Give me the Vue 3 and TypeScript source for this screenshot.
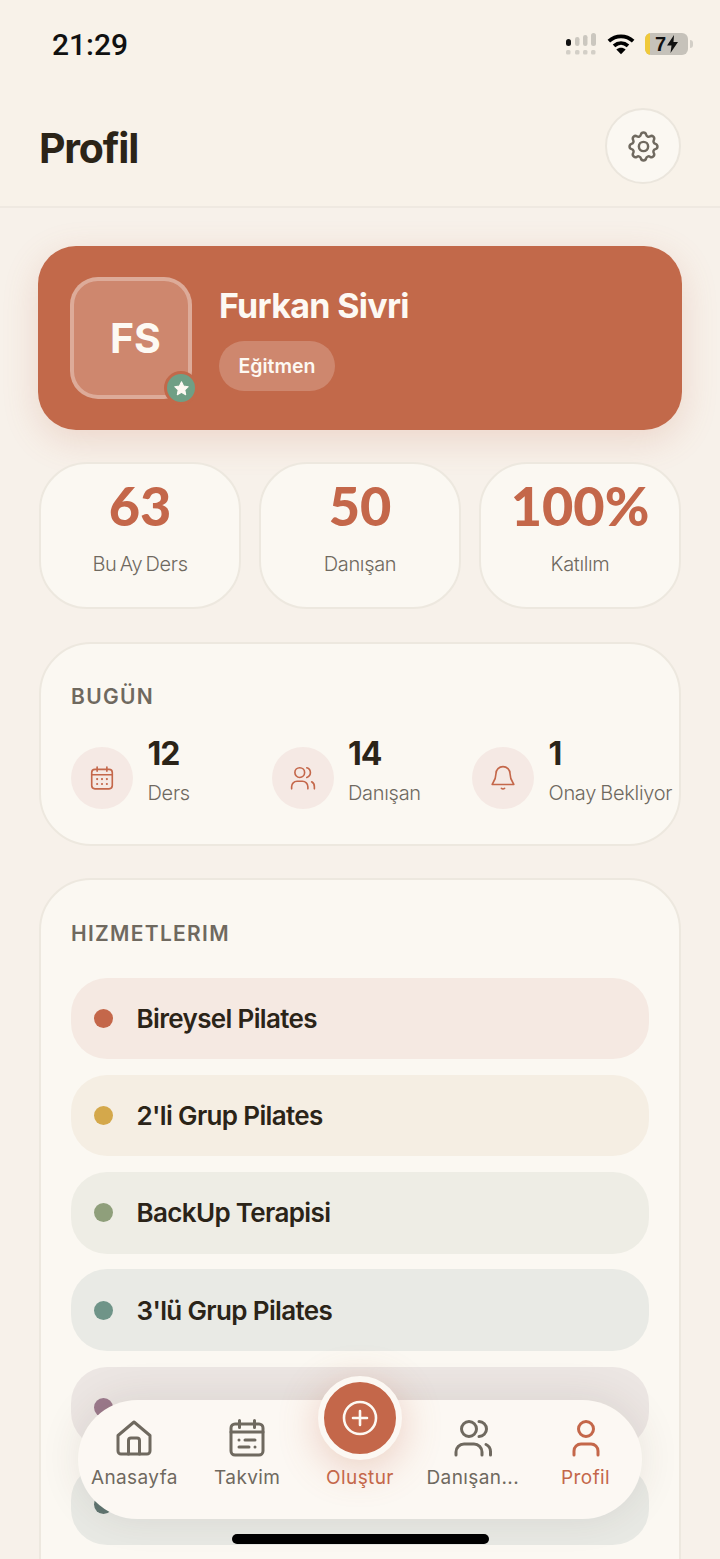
<template>
  <div class="screen">
    <header class="top">
      <div class="status">
        <span class="clock">21:29</span>
        <div class="status-icons">
          <svg width="32" height="22" viewBox="0 0 32 22">
            <rect x="1" y="6" width="5" height="7" rx="2.500" fill="#111" />
            <rect x="10" y="4" width="4.500" height="9" rx="2.200" fill="#cbc7bf" />
            <rect x="18" y="2" width="4.500" height="11" rx="2.200" fill="#cbc7bf" />
            <rect x="26" y="0" width="5" height="13" rx="2.500" fill="#cbc7bf" />
            <rect x="1" y="17" width="4.500" height="4.500" rx="1.500" fill="#d3cfc7" />
            <rect x="10" y="17" width="4.500" height="4.500" rx="1.500" fill="#d3cfc7" />
            <rect x="18" y="17" width="4.500" height="4.500" rx="1.500" fill="#d3cfc7" />
            <rect x="26" y="17" width="4.500" height="4.500" rx="1.500" fill="#d3cfc7" />
          </svg>
          <svg width="28" height="22" viewBox="0 0 30 23" fill="none" stroke="#000" stroke-width="4">
            <path d="M2 8.500C9.500 1.500 20.500 1.500 28 8.500" />
            <path d="M7.500 13.500C12 9.500 18 9.500 22.500 13.500" />
            <path d="M15 22.500L10 17.500C13 15 17 15 20 17.500Z" fill="#000" stroke="none" />
          </svg>
          <div class="battery-wrap">
            <div class="battery">
              <span class="charge"></span>
              <span class="level">7</span>
              <svg width="11" height="18" viewBox="0 0 11 18"><path d="M7 0L0 10.500H4.500L3.500 18L11 7H6.500Z" fill="#111" /></svg>
            </div>
            <span class="nub"></span>
          </div>
        </div>
      </div>
      <div class="title-row">
        <h1>Profil</h1>
        <button class="gear" type="button">
          <svg width="37" height="37" viewBox="0 0 24 24" fill="none" stroke="#6f695f" stroke-width="1.600" stroke-linecap="round" stroke-linejoin="round">
            <path d="M10.300 4.300c.4-1.800 3-1.800 3.400 0a1.700 1.700 0 0 0 2.600 1.100c1.500-.9 3.300.8 2.400 2.400a1.700 1.700 0 0 0 1 2.500c1.800.5 1.800 3 0 3.400a1.700 1.700 0 0 0-1 2.600c.9 1.500-.9 3.300-2.400 2.400a1.700 1.700 0 0 0-2.600 1c-.4 1.800-3 1.800-3.400 0a1.700 1.700 0 0 0-2.600-1c-1.500.9-3.300-.9-2.400-2.400a1.700 1.700 0 0 0-1-2.600c-1.800-.4-1.800-2.900 0-3.400a1.700 1.700 0 0 0 1-2.500c-.9-1.600.9-3.300 2.400-2.400a1.700 1.700 0 0 0 2.600-1.100z" />
            <circle cx="12" cy="12" r="3" />
          </svg>
        </button>
      </div>
    </header>

    <main class="content">
      <section class="hero">
        <div class="avatar">
          FS
          <span class="star">
            <svg width="17" height="17" viewBox="0 0 24 24"><path d="M12 2.500l2.900 6.100 6.600.9-4.800 4.600 1.200 6.600-5.900-3.200-5.900 3.200 1.200-6.600-4.800-4.600 6.600-.9z" fill="#fdf9f3" stroke="#fdf9f3" stroke-width="1.500" stroke-linejoin="round" /></svg>
          </span>
        </div>
        <div class="hero-text">
          <div class="name">Furkan Sivri</div>
          <span class="role">Eğitmen</span>
        </div>
      </section>

      <section class="stats">
        <div v-for="s in stats" :key="s.label" class="stat">
          <div class="stat-value">{{ s.value }}</div>
          <div class="stat-label">{{ s.label }}</div>
        </div>
      </section>

      <section class="card today">
        <h2>BUGÜN</h2>
        <div class="today-row">
          <div class="today-item">
            <span class="round">
              <svg width="26" height="26" viewBox="0 0 24 24" fill="none" stroke="#c4674a" stroke-width="1.500" stroke-linecap="round" stroke-linejoin="round">
                <rect x="2.500" y="4" width="19" height="18" rx="3" />
                <path d="M2.500 9h19M7.500 1.800v4M16.500 1.800v4" />
                <path d="M7.500 13h.01M12 13h.01M16.500 13h.01M7.500 17.500h.01M12 17.500h.01M16.500 17.500h.01" stroke-width="2" />
              </svg>
            </span>
            <div>
              <div class="today-num">12</div>
              <div class="today-label">Ders</div>
            </div>
          </div>
          <div class="today-item">
            <span class="round">
              <svg width="26" height="26" viewBox="0 0 24 24" fill="none" stroke="#c4674a" stroke-width="1.500" stroke-linecap="round" stroke-linejoin="round">
                <circle cx="9" cy="7" r="4.500" />
                <path d="M1.500 22v-2a5 5 0 0 1 5-5h5a5 5 0 0 1 5 5v2M15.500 2.500a4.700 4.700 0 0 1 0 9M20 15.500a5 5 0 0 1 2.500 4.500v2" />
              </svg>
            </span>
            <div>
              <div class="today-num">14</div>
              <div class="today-label">Danışan</div>
            </div>
          </div>
          <div class="today-item">
            <span class="round">
              <svg width="26" height="26" viewBox="0 0 24 24" fill="none" stroke="#c4674a" stroke-width="1.500" stroke-linecap="round" stroke-linejoin="round">
                <path d="M12 1.500a6.500 6.500 0 0 0-6.500 6.500c0 6-3.500 9-3.500 10h20c0-1-3.500-4-3.500-10A6.500 6.500 0 0 0 12 1.500z" />
                <path d="M10.500 21.500a2 2 0 0 0 3 0" />
              </svg>
            </span>
            <div>
              <div class="today-num">1</div>
              <div class="today-label">Onay Bekliyor</div>
            </div>
          </div>
        </div>
      </section>

      <section class="card services">
        <h2>HIZMETLERIM</h2>
        <div class="service-list">
          <div v-for="s in services" :key="s.dot" class="service" :style="{ background: s.bg }">
            <span class="dot" :style="{ background: s.dot }"></span>
            <span class="service-name">{{ s.name }}</span>
          </div>
        </div>
      </section>
    </main>

    <nav class="tabbar">
      <div class="tab">
        <svg width="38" height="38" viewBox="0 0 38 38" fill="none" stroke="#6f695f" stroke-width="3" stroke-linecap="round" stroke-linejoin="round">
          <path d="M3 16.500L19 3l16 13.500V32a3 3 0 0 1-3 3H6a3 3 0 0 1-3-3z" />
          <path d="M13.500 35V21.500a2.500 2.500 0 0 1 2.500-2.500h6a2.500 2.500 0 0 1 2.500 2.500V35" />
        </svg>
        <span>Anasayfa</span>
      </div>
      <div class="tab">
        <svg width="36" height="38" viewBox="0 0 36 38" fill="none" stroke="#6f695f" stroke-width="3" stroke-linecap="round" stroke-linejoin="round">
          <rect x="2" y="5" width="32" height="31" rx="4" />
          <path d="M2 13h32M10.500 1.500v7M25.500 1.500v7M10 21h.01M16 21h10M10 28h10M26 28h.01" />
        </svg>
        <span>Takvim</span>
      </div>
      <div class="tab create">
        <button class="plus" type="button">
          <svg width="38" height="38" viewBox="0 0 38 38" fill="none" stroke="#fdf9f3" stroke-width="2.600" stroke-linecap="round">
            <circle cx="19" cy="19" r="16" />
            <path d="M19 12v14M12 19h14" />
          </svg>
        </button>
        <span>Oluştur</span>
      </div>
      <div class="tab">
        <svg width="38" height="38" viewBox="0 0 38 38" fill="none" stroke="#6f695f" stroke-width="3" stroke-linecap="round" stroke-linejoin="round">
          <circle cx="15" cy="10" r="7.500" />
          <path d="M2 36v-3a8 8 0 0 1 8-8h10a8 8 0 0 1 8 8v3M25 2.500a7.500 7.500 0 0 1 0 15M32 25.500a8 8 0 0 1 4.500 7V36" />
        </svg>
        <span>Danışan...</span>
      </div>
      <div class="tab active">
        <svg width="36" height="38" viewBox="0 0 36 38" fill="none" stroke="#c4674a" stroke-width="3" stroke-linecap="round" stroke-linejoin="round">
          <circle cx="18" cy="10" r="7.500" />
          <path d="M6 36v-4a7 7 0 0 1 7-7h10a7 7 0 0 1 7 7v4" />
        </svg>
        <span>Profil</span>
      </div>
    </nav>

    <div class="home-bar"></div>
  </div>
</template>

<script setup lang="ts">
const stats = [
  { value: '63', label: 'Bu Ay Ders' },
  { value: '50', label: 'Danışan' },
  { value: '100%', label: 'Katılım' },
];

// the last two rows sit behind the tab bar, their names can't be read
const services = [
  { name: 'Bireysel Pilates', dot: '#c4674a', bg: '#f5e9e2' },
  { name: "2'li Grup Pilates", dot: '#d4a84b', bg: '#f5eee3' },
  { name: 'BackUp Terapisi', dot: '#8f9f7b', bg: '#eeede5' },
  { name: "3'lü Grup Pilates", dot: '#6f9488', bg: '#e9eae5' },
  { name: '', dot: '#9c7a8c', bg: '#ece6e3' },
  { name: '', dot: '#5f7570', bg: '#e8e9e4' },
];
</script>

<style>
html,
body {
  margin: 0;
  background: #f7f1ea;
}
</style>

<style scoped>
.screen {
  position: relative;
  width: 720px;
  height: 1559px;
  overflow: hidden;
  background: #f7f1ea;
  font-family: Inter, 'Noto Sans', sans-serif;
  color: #2b2418;
}

.top {
  height: 206px;
  background: #f8f2e9;
  border-bottom: 2px solid #efe9e1;
}

.status {
  display: flex;
  justify-content: space-between;
  align-items: center;
  height: 24px;
  padding: 32px 27px 0 52px;
}

.clock {
  font-family: Roboto, sans-serif;
  font-size: 30px;
  font-weight: 500;
  color: #111;
}

.status-icons {
  display: flex;
  align-items: center;
  gap: 10px;
}

.battery-wrap {
  display: flex;
  align-items: center;
  gap: 2px;
}

.nub {
  width: 3px;
  height: 8px;
  border-radius: 0 3px 3px 0;
  background: #d3cfc7;
}

.battery {
  position: relative;
  display: flex;
  align-items: center;
  justify-content: center;
  gap: 1px;
  width: 43px;
  height: 22px;
  overflow: hidden;
  border-radius: 6px;
  background: #c6c2ba;
}

.charge {
  position: absolute;
  left: 0;
  top: 0;
  bottom: 0;
  width: 5px;
  background: #f0c93a;
}

.level {
  font-family: 'Liberation Sans', sans-serif;
  font-size: 20px;
  font-weight: 700;
  color: #111;
}

.title-row {
  display: flex;
  justify-content: space-between;
  align-items: center;
  padding: 52px 39px 0 39px;
}

h1 {
  margin: 4px 0 0;
  font-size: 41px;
  font-weight: 700;
  letter-spacing: -1.200px;
  color: #2b2418;
}

.gear {
  display: flex;
  align-items: center;
  justify-content: center;
  width: 76px;
  height: 76px;
  padding: 0;
  border: 2px solid #ebe6dd;
  border-radius: 50%;
  background: #fbf8f2;
}

.content {
  padding: 38px 38px 0;
}

.hero {
  display: flex;
  align-items: center;
  gap: 27px;
  height: 184px;
  box-sizing: border-box;
  padding: 0 32px;
  border-radius: 38px;
  background: #c2694a;
  box-shadow: 0 10px 36px rgba(196, 103, 74, 0.2);
}

.avatar {
  position: relative;
  display: flex;
  align-items: center;
  justify-content: center;
  width: 122px;
  height: 122px;
  box-sizing: border-box;
  padding-left: 9px;
  border: 4px solid rgba(255, 255, 255, 0.3);
  border-radius: 28px;
  background: rgba(255, 255, 255, 0.2);
  font-size: 41px;
  font-weight: 700;
  color: #fdf9f3;
}

.star {
  position: absolute;
  right: -10px;
  bottom: -10px;
  display: flex;
  align-items: center;
  justify-content: center;
  width: 28px;
  height: 28px;
  border: 3px solid #c2694a;
  border-radius: 50%;
  background: #6f9f85;
}

.hero-text {
  display: flex;
  flex-direction: column;
  align-items: flex-start;
  gap: 15px;
}

.name {
  font-size: 34px;
  font-weight: 700;
  letter-spacing: -0.700px;
  color: #fdf9f3;
}

.role {
  display: flex;
  align-items: center;
  height: 50px;
  padding: 0 19.500px;
  border-radius: 26px;
  background: rgba(255, 255, 255, 0.2);
  font-size: 19.500px;
  font-weight: 600;
  color: #fdf9f3;
}

.stats {
  display: grid;
  grid-template-columns: repeat(3, 1fr);
  gap: 18px;
  margin: 32px 1px 0;
}

.stat {
  display: flex;
  flex-direction: column;
  align-items: center;
  height: 147px;
  box-sizing: border-box;
  padding-top: 12px;
  border: 2px solid #ede8df;
  border-radius: 48px;
  background: #fbf8f2;
}

.stat-value {
  font-family: Lato, Inter, sans-serif;
  font-size: 54px;
  font-weight: 900;
  line-height: 60px;
  color: #c4674a;
}

.stat-label {
  margin-top: 16px;
  font-size: 20px;
  font-weight: 300;
  letter-spacing: -0.350px;
  word-spacing: -2px;
  color: #6f695f;
}

.card {
  margin: 33px 1px 0;
  box-sizing: border-box;
  border: 2px solid #ede8df;
  border-radius: 52px;
  background: #fbf8f2;
}

.today {
  height: 204px;
  padding: 40px 0 0 30px;
}

h2 {
  margin: 0;
  font-size: 21px;
  font-weight: 600;
  line-height: 26px;
  letter-spacing: 1.300px;
  color: #6f695f;
}

.today-row {
  display: flex;
  margin-top: 24px;
}

.today-item {
  display: flex;
  width: 200.500px;
  gap: 14.500px;
  white-space: nowrap;
}

.round {
  display: flex;
  align-items: center;
  justify-content: center;
  flex: none;
  width: 62px;
  height: 62px;
  margin-top: 13px;
  border-radius: 50%;
  background: #f5e9e4;
}

.today-num {
  font-size: 32px;
  font-weight: 700;
  line-height: 40px;
  letter-spacing: -1px;
  color: #2b2418;
}

.today-label {
  margin-top: 7px;
  font-size: 20px;
  font-weight: 300;
  line-height: 24px;
  letter-spacing: -0.300px;
  word-spacing: -1px;
  color: #6f695f;
}

.services {
  height: 800px;
  margin-top: 32px;
  padding: 41px 30px 0;
}

.service-list {
  display: flex;
  flex-direction: column;
  gap: 15.750px;
  margin-top: 30.500px;
}

.service {
  display: flex;
  align-items: center;
  gap: 23.500px;
  height: 81.500px;
  padding-left: 23px;
  border-radius: 36px;
}

.dot {
  width: 19px;
  height: 19px;
  border-radius: 50%;
}

.service-name {
  font-size: 26px;
  font-weight: 600;
  letter-spacing: -0.650px;
  color: #2b2418;
}

.tabbar {
  position: absolute;
  left: 78px;
  top: 1400px;
  display: flex;
  justify-content: space-between;
  width: 564px;
  height: 119px;
  box-sizing: border-box;
  border-radius: 60px;
  background: #fcf8f3;
  box-shadow: 0 -2px 40px rgba(70, 50, 35, 0.1);
}

.tab {
  position: relative;
  display: flex;
  flex-direction: column;
  align-items: center;
  width: 112.800px;
  padding-top: 19px;
  font-size: 19px;
  letter-spacing: 0.400px;
  color: #6f695f;
  white-space: nowrap;
}

.tab span {
  margin-top: 9px;
}

.tab.active {
  color: #c4674a;
}

.create {
  color: #c4674a;
}

.create span {
  margin-top: 48px;
  transform: translateY(-1px);
}

.plus {
  position: absolute;
  top: -24px;
  left: 50%;
  display: flex;
  align-items: center;
  justify-content: center;
  width: 84px;
  height: 84px;
  margin-left: -42px;
  padding: 0;
  box-sizing: border-box;
  border: 6px solid #fcf8f3;
  border-radius: 50%;
  background: #c4674a;
  box-shadow: 0 8px 40px rgba(196, 103, 74, 0.3);
}

.home-bar {
  position: absolute;
  left: 232px;
  bottom: 15px;
  width: 257px;
  height: 10px;
  border-radius: 5px;
  background: #000;
}
</style>
